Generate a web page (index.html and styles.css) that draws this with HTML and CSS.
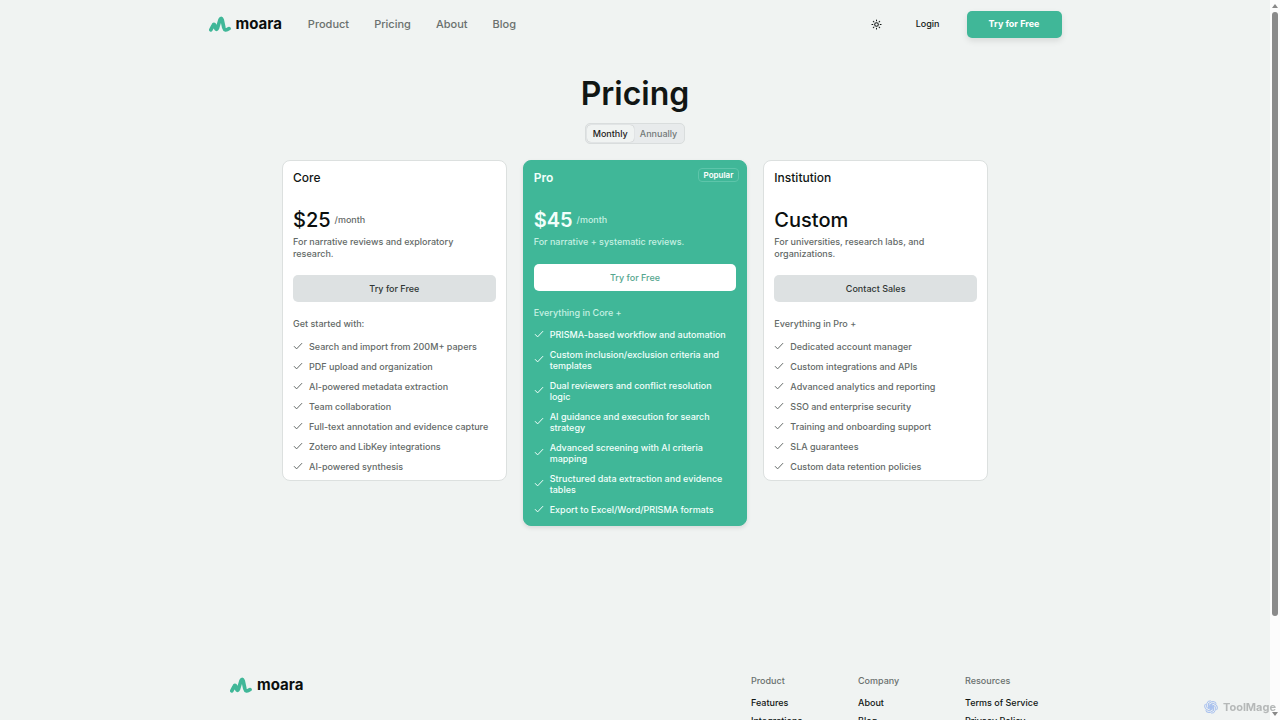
FILE: index.html
```html
<!DOCTYPE html>
<html lang="en">
<head>
<meta charset="utf-8">
<meta name="viewport" content="width=device-width, initial-scale=1">
<title>Pricing – moara</title>
<link rel="stylesheet" href="styles.css">
</head>
<body>
<svg class="sprite" aria-hidden="true">
  <symbol id="mark" viewBox="0 0 22 16"><path d="M1.800 13.800L4 9.500Q5 7.400 5.800 9.400L6.500 12Q7.500 14.600 8.500 12L11 3.800Q12.200 .8 13.200 3.800L14.800 11.500Q15.800 15.600 20 12.600" fill="none" stroke="#40b798" stroke-width="3.700" stroke-linecap="round" stroke-linejoin="round"/></symbol>
  <symbol id="check" viewBox="0 0 10 10"><path d="M1.300 4.500 3.600 6.900 8.800 1.400" fill="none" stroke="currentColor" stroke-width="1" stroke-linecap="round" stroke-linejoin="round"/></symbol>
</svg>
<div class="page">
  <header class="header">
    <a class="logo" href="#"><svg class="mark"><use href="#mark"/></svg>moara</a>
    <nav class="nav">
      <a href="#">Product</a><a href="#">Pricing</a><a href="#">About</a><a href="#">Blog</a>
    </nav>
    <div class="actions">
      <button class="theme" aria-label="Toggle theme">
        <svg class="sun" viewBox="0 0 24 24" fill="none" stroke="currentColor" stroke-width="2.200" stroke-linecap="round"><circle cx="12" cy="12" r="4"/><path d="M12 2v2M12 20v2M4.900 4.900l1.400 1.400M17.700 17.700l1.400 1.400M2 12h2M20 12h2M6.300 17.700l-1.400 1.400M19.100 4.900l-1.400 1.400"/></svg>
      </button>
      <a class="login" href="#">Login</a>
      <button class="btn cta">Try for Free</button>
    </div>
  </header>

  <main class="main">
    <h1 class="title">Pricing</h1>
    <div class="toggle">
      <button class="option active" aria-pressed="true">Monthly</button>
      <button class="option" aria-pressed="false">Annually</button>
    </div>
    <div class="plans">
      <section class="card">
        <h2 class="name">Core</h2>
        <p class="price"><span class="amount">$25</span><span class="period">/month</span></p>
        <p class="desc">For narrative reviews and exploratory research.</p>
        <button class="btn">Try for Free</button>
        <p class="lead">Get started with:</p>
        <ul class="features">
          <li><svg class="check"><use href="#check"/></svg>Search and import from 200M+ papers</li>
          <li><svg class="check"><use href="#check"/></svg>PDF upload and organization</li>
          <li><svg class="check"><use href="#check"/></svg>AI-powered metadata extraction</li>
          <li><svg class="check"><use href="#check"/></svg>Team collaboration</li>
          <li><svg class="check"><use href="#check"/></svg>Full-text annotation and evidence capture</li>
          <li><svg class="check"><use href="#check"/></svg>Zotero and LibKey integrations</li>
          <li><svg class="check"><use href="#check"/></svg>AI-powered synthesis</li>
        </ul>
      </section>
      <section class="card pro">
        <span class="badge">Popular</span>
        <h2 class="name">Pro</h2>
        <p class="price"><span class="amount">$45</span><span class="period">/month</span></p>
        <p class="desc">For narrative + systematic reviews.</p>
        <button class="btn">Try for Free</button>
        <p class="lead">Everything in Core +</p>
        <ul class="features">
          <li><svg class="check"><use href="#check"/></svg>PRISMA-based workflow and automation</li>
          <li><svg class="check"><use href="#check"/></svg>Custom inclusion/exclusion criteria and templates</li>
          <li><svg class="check"><use href="#check"/></svg>Dual reviewers and conflict resolution logic</li>
          <li><svg class="check"><use href="#check"/></svg>AI guidance and execution for search strategy</li>
          <li><svg class="check"><use href="#check"/></svg>Advanced screening with AI criteria mapping</li>
          <li><svg class="check"><use href="#check"/></svg>Structured data extraction and evidence tables</li>
          <li><svg class="check"><use href="#check"/></svg>Export to Excel/Word/PRISMA formats</li>
        </ul>
      </section>
      <section class="card">
        <h2 class="name">Institution</h2>
        <p class="price"><span class="amount">Custom</span></p>
        <p class="desc">For universities, research labs, and organizations.</p>
        <button class="btn">Contact Sales</button>
        <p class="lead">Everything in Pro +</p>
        <ul class="features">
          <li><svg class="check"><use href="#check"/></svg>Dedicated account manager</li>
          <li><svg class="check"><use href="#check"/></svg>Custom integrations and APIs</li>
          <li><svg class="check"><use href="#check"/></svg>Advanced analytics and reporting</li>
          <li><svg class="check"><use href="#check"/></svg>SSO and enterprise security</li>
          <li><svg class="check"><use href="#check"/></svg>Training and onboarding support</li>
          <li><svg class="check"><use href="#check"/></svg>SLA guarantees</li>
          <li><svg class="check"><use href="#check"/></svg>Custom data retention policies</li>
        </ul>
      </section>
    </div>
  </main>

  <footer class="footer">
    <a class="logo" href="#"><svg class="mark"><use href="#mark"/></svg>moara</a>
    <nav class="links">
      <div class="col"><h3>Product</h3><a href="#">Features</a><a href="#">Integrations</a></div>
      <div class="col"><h3>Company</h3><a href="#">About</a><a href="#">Blog</a></div>
      <div class="col"><h3>Resources</h3><a href="#">Terms of Service</a><a href="#">Privacy Policy</a></div>
    </nav>
  </footer>
</div>

<div class="scrollbar" aria-hidden="true">
  <svg class="arrow" viewBox="0 0 10 6"><path d="M2 5 5 1 8 5z" fill="#888"/></svg>
  <div class="thumb"></div>
  <svg class="arrow" viewBox="0 0 10 6"><path d="M2 1 5 5 8 1z" fill="#888"/></svg>
</div>
<div class="watermark">
  <svg class="knot" viewBox="0 0 16 16" fill="none" stroke="#a9c1ee" stroke-width="1"><g id="petal"><path d="M8 5.200L12.300 7.600V11.200Q11.500 14.600 8.200 14.200"/></g><use href="#petal" transform="rotate(60 8 8)"/><use href="#petal" transform="rotate(120 8 8)"/><use href="#petal" transform="rotate(180 8 8)"/><use href="#petal" transform="rotate(240 8 8)"/><use href="#petal" transform="rotate(300 8 8)"/><circle cx="8" cy="8" r="1.800" fill="#a9c1ee"/></svg>
  ToolMage
</div>
</body>
</html>
```
FILE: styles.css
```css
* { box-sizing: border-box; }
html { height: 100%; }
body {
  margin: 0;
  height: 100%;
  overflow: hidden;
  background: #f0f3f2;
  color: #111614;
  font: 500 9px/12px Inter, sans-serif;
}
h1, h2, h3, p, ul { margin: 0; padding: 0; font-weight: 500; }
a { color: inherit; text-decoration: none; }
button { font: inherit; color: inherit; border: 0; padding: 0; background: none; cursor: pointer; }
.sprite { position: absolute; width: 0; height: 0; }
.page { height: 100%; overflow: hidden; margin-right: 10px; }

.header {
  display: flex;
  align-items: center;
  max-width: 853px;
  height: 48px;
  margin: 0 auto;
}
.logo { display: flex; align-items: center; gap: 5px; font-size: 15px; line-height: 20px; font-weight: 700; color: #0b0f0e; }
.mark { width: 22px; height: 16px; }
.nav { display: flex; gap: 25px; margin-left: 26px; font-size: 11px; line-height: 16px; color: #6a706e; }
.actions { display: flex; align-items: center; margin-left: auto; }
.theme { display: flex; margin-right: 34px; }
.sun { width: 11px; height: 11px; }
.login { margin-right: 27px; }
.btn {
  display: block;
  width: 100%;
  height: 27px;
  border-radius: 5px;
  background: #dde1e2;
  color: #303634;
}
.cta { width: 95px; background: #40b798; color: #fff; font-weight: 700; box-shadow: 0 3px 6px #0000001a; }

.main { display: flex; flex-direction: column; align-items: center; padding-top: 26px; }
.title { font-size: 32px; line-height: 40px; font-weight: 600; }
.toggle {
  display: flex;
  margin: 9px 0 16px;
  padding: 1px;
  border: 1px solid #d9dddd;
  border-radius: 5px;
  background: #e8ebec;
}
.option { height: 17px; padding: 0 6px; border-radius: 4px; color: #737978; }
.active { background: #f0f3f2; color: #1d2221; box-shadow: 0 0 1px #0000004d; }
.plans { display: grid; grid-template-columns: repeat(3, 1fr); align-items: start; gap: 16px; width: 100%; max-width: 706px; }
.card { position: relative; padding: 9px 10px 8px; border: 1px solid #dce0df; border-radius: 8px; background: #fff; color: #636967; }
.name { font-size: 12px; line-height: 16px; color: #111614; }
.price { display: flex; align-items: center; gap: 4px; margin-top: 22px; line-height: 24px; }
.amount { font-size: 20px; color: #0b0f0e; }
.desc { margin: 4px 0 15px; }
.lead { margin: 16px 0 11px; }
.features { display: grid; gap: 9px; list-style: none; line-height: 11px; }
.features li { display: flex; align-items: center; gap: 6px; }
.check { flex: none; width: 10px; height: 10px; }
.pro { border-color: #40b798; background: #40b798; color: #c5f0e2; box-shadow: 0 2px 4px #0000001a; }
.pro .name, .pro .amount, .pro .features { color: #f2fffb; }
.pro .name, .pro .amount { font-weight: 600; }
.pro .desc { margin-bottom: 16px; }
.pro .lead { margin-bottom: 10px; }
.pro .features { padding: 0 4px 2px 0; }
.pro .btn { background: #fff; color: #55a68e; }
.badge {
  position: absolute;
  top: 7px;
  right: 7px;
  padding: 0 5px;
  border: 1px solid #5dc5aa;
  border-radius: 4px;
  color: #fff;
  font-size: 8px;
  font-weight: 600;
}

.footer { display: flex; justify-content: space-between; max-width: 810px; margin: 149px auto 0; }
.footer .logo { align-self: flex-start; }
.links { display: grid; grid-template-columns: 107px 107px 1fr; width: 289px; }
.col { display: grid; gap: 6px; white-space: nowrap; }
.col h3 { margin-bottom: 4px; font-size: 9px; color: #6a706e; }

.scrollbar {
  position: fixed;
  inset: 0 0 0 auto;
  display: flex;
  flex-direction: column;
  align-items: center;
  width: 10px;
  padding: 3px 0;
  background: #fcfcfc;
}
.arrow { width: 10px; height: 6px; flex: none; }
.thumb { width: 6px; height: 84.6%; margin: 3px 0 auto; border-radius: 3px; background: #8b8b8b; }
.watermark {
  position: fixed;
  right: 4px;
  bottom: 5px;
  display: flex;
  align-items: center;
  gap: 4px;
  color: #b5b8b8;
  font: 700 11px/16px Inter, sans-serif;
}
.knot { width: 16px; height: 16px; }
```
